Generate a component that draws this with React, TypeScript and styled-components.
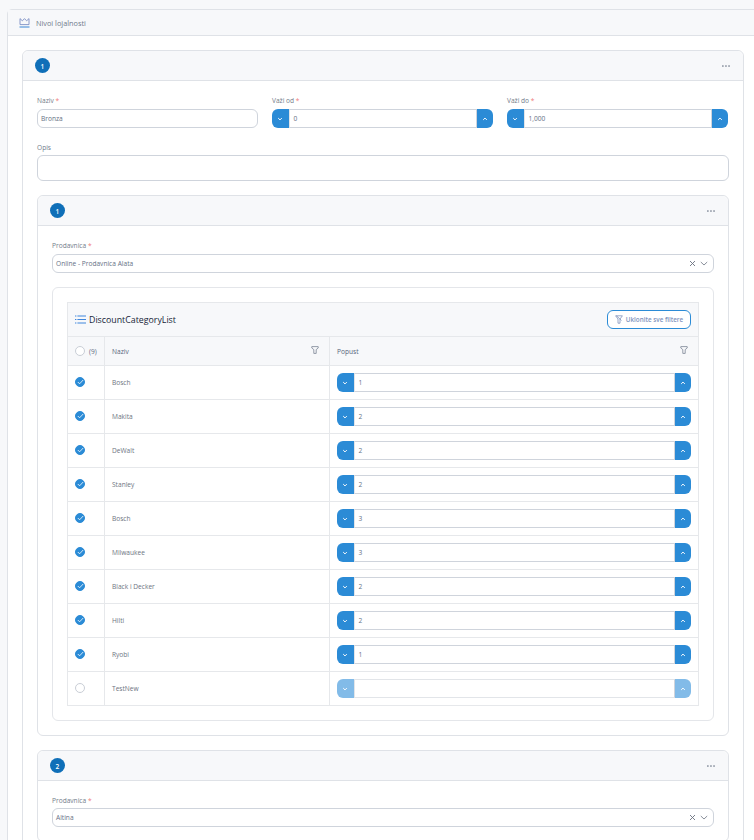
import { createGlobalStyle, styled } from 'styled-components';

const GlobalStyle = createGlobalStyle`
  html, body {
    margin: 0;
    padding: 0;
    height: 840px;
    overflow: hidden;
    background: #f7f8fa;
  }
  * { box-sizing: border-box; }
  body {
    font-family: "Open Sans", "Liberation Sans", sans-serif;
    font-size: 6.6px;
    color: #667085;
  }
`;

const Page = styled.div`
  width: 754px;
  height: 840px;
  padding: 9px 0 0 7px;
  overflow: hidden;
`;

const Shell = styled.div`
  width: 760px;
  background: #fff;
  border: 1px solid #dfe2e7;
  border-radius: 5px 0 0 0;
`;

const ShellHeader = styled.div`
  display: flex;
  align-items: center;
  gap: 6px;
  height: 26px;
  padding-left: 11px;
  background: #f7f8fa;
  border-bottom: 1px solid #dfe2e7;
  font-size: 7.3px;
  color: #6f7a8a;
`;

const ShellBody = styled.div`
  width: 736px;
  padding: 14px 0 0 14px;
`;

const Card = styled.section`
  border: 1px solid #dfe2e7;
  border-radius: 6px;
  background: #fff;
  & + & {
    margin-top: 14px;
  }
`;

const CardHeader = styled.div`
  display: flex;
  align-items: center;
  justify-content: space-between;
  height: 30px;
  padding: 0 13px 0 12px;
  background: #f7f8fa;
  border-bottom: 1px solid #dfe2e7;
  border-radius: 6px 6px 0 0;
`;

const Badge = styled.span`
  display: flex;
  align-items: center;
  justify-content: center;
  width: 15px;
  height: 15px;
  padding-top: 1px;
  border-radius: 50%;
  background: #0f6fb8;
  color: #fff;
  font-size: 6.6px;
  font-weight: 600;
`;

const CardBody = styled.div`
  display: flex;
  flex-direction: column;
  padding: 14px;
`;

const FormRow = styled.div`
  display: grid;
  grid-template-columns: repeat(3, 221px);
  column-gap: 14px;
`;

const Field = styled.div`
  display: flex;
  flex-direction: column;
`;

const NoteField = styled(Field)`
  margin: 14px 0;
`;

const Label = styled.label<{ $height?: number }>`
  height: ${(p) => p.$height ?? 14}px;
  line-height: 10px;
  padding-top: 1px;
  color: #737c8a;
`;

const Required = styled.span`
  color: #ef7a7a;
`;

const TextInput = styled.div`
  display: flex;
  align-items: center;
  height: 19px;
  padding-left: 3px;
  border: 1px solid #cfd4dc;
  border-radius: 6px;
  color: #667085;
`;

const TextArea = styled.div`
  height: 26px;
  border: 1px solid #cfd4dc;
  border-radius: 6px;
`;

const Spin = styled.div`
  display: flex;
  height: 19px;
`;

const SpinButton = styled.span<{ $side: 'left' | 'right'; $off?: boolean }>`
  display: flex;
  align-items: center;
  justify-content: center;
  flex: 0 0 16.5px;
  background: ${(p) => (p.$off ? '#82bbe8' : '#2b8bd6')};
  color: #fff;
  border-radius: ${(p) => (p.$side === 'left' ? '6px 0 0 6px' : '0 6px 6px 0')};
`;

const SpinValue = styled.div<{ $off?: boolean }>`
  flex: 1;
  display: flex;
  align-items: center;
  padding-left: 4px;
  border-top: 1px solid ${(p) => (p.$off ? '#e2e5e9' : '#cfd4dc')};
  border-bottom: 1px solid ${(p) => (p.$off ? '#e2e5e9' : '#cfd4dc')};
  border-left: 1px solid #e2e5e9;
  border-right: 1px solid #cfd4dc;
  color: #667085;
`;

const SelectBox = styled(TextInput)`
  justify-content: space-between;
  padding-right: 5px;
`;

const SelectIcons = styled.div`
  display: flex;
  align-items: center;
  gap: 4px;
  color: #6b7280;
`;

const ListCard = styled.div`
  margin-top: 14px;
  padding: 14px;
  border: 1px solid #e4e6ea;
  border-radius: 6px;
`;

const Table = styled.div`
  border: 1px solid #e6e8eb;
`;

const TableTitle = styled.div`
  display: flex;
  align-items: center;
  justify-content: space-between;
  height: 34px;
  padding: 0 7px;
  background: #f7f8fa;
  border-bottom: 1px solid #e6e8eb;
`;

const TitleText = styled.div`
  display: flex;
  align-items: center;
  gap: 3px;
  font-size: 8.8px;
  color: #161d38;
`;

const ClearButton = styled.button`
  display: flex;
  align-items: center;
  justify-content: center;
  gap: 3px;
  width: 84px;
  height: 19px;
  padding: 0;
  border: 1px solid #2b8bd6;
  border-radius: 6px;
  background: #fff;
  color: #8093bd;
  font-family: inherit;
  font-size: 6.3px;
  font-weight: 600;
`;

const Row = styled.div<{ $head?: boolean }>`
  display: grid;
  grid-template-columns: 37px 225px 1fr;
  height: ${(p) => (p.$head ? 29 : 34)}px;
  background: ${(p) => (p.$head ? '#f7f8fa' : '#fff')};
  border-bottom: 1px solid #e6e8eb;
  &:last-child {
    height: 33px;
    border-bottom: 0;
  }
`;

const Cell = styled.div`
  display: flex;
  align-items: center;
  justify-content: space-between;
  padding: 0 7px;
  border-right: 1px solid #e6e8eb;
  &:last-child {
    border-right: 0;
  }
`;

const NameCell = styled(Cell)`
  color: #6d7482;
`;

const HeadCell = styled(Cell)`
  padding-right: 10px;
  color: #56647a;
  svg {
    margin-top: -2px;
  }
`;

const SelectCell = styled(Cell)`
  justify-content: flex-start;
  gap: 4px;
`;

const Check = styled.span<{ $on?: boolean }>`
  display: flex;
  align-items: center;
  justify-content: center;
  width: 10px;
  height: 10px;
  margin-top: -1px;
  border-radius: 50%;
  background: ${(p) => (p.$on ? '#2b8bd6' : '#fff')};
  border: 1px solid ${(p) => (p.$on ? '#2b8bd6' : '#c9ced6')};
`;

const Count = styled.span`
  color: #5d6b82;
`;

const SpinWrap = styled.div`
  flex: 1;
`;

const Crown = () => (
  <svg width="11" height="10" viewBox="0 0 11 10" fill="none" strokeWidth="0.9">
    <path d="M1 0.6 V6.6 H10 V0.6 L7.6 2.8 L5.5 0.6 L3.4 2.8 Z" stroke="#7d8fc4" strokeLinejoin="round" />
    <path d="M0.5 9 H10.5" stroke="#4a8fd8" strokeWidth="1.1" />
  </svg>
);

const Chevron = ({ up }: { up?: boolean }) => (
  <svg width="6" height="6" viewBox="0 0 6 6" fill="none" stroke="currentColor" strokeWidth="1">
    <path d={up ? 'M1.2 3.9 L3 2.1 L4.8 3.9' : 'M1.2 2.1 L3 3.9 L4.8 2.1'} />
  </svg>
);

const Dots = () => (
  <svg width="8" height="2" viewBox="0 0 8 2" fill="#9aa1ad">
    <rect x="0" y="0.2" width="1.7" height="1.7" />
    <rect x="3.1" y="0.2" width="1.7" height="1.7" />
    <rect x="6.2" y="0.2" width="1.7" height="1.7" />
  </svg>
);

const Cross = () => (
  <svg width="7" height="7" viewBox="0 0 7 7" fill="none" stroke="currentColor" strokeWidth="0.9">
    <path d="M1 1 L6 6 M6 1 L1 6" />
  </svg>
);

const SelectChevron = () => (
  <svg width="8" height="7" viewBox="0 0 8 7" fill="none" stroke="currentColor" strokeWidth="0.8">
    <path d="M0.8 2 L4 5 L7.2 2" />
  </svg>
);

const Filter = () => (
  <svg width="8" height="8" viewBox="0 0 8 8" fill="none" stroke="#7b8494" strokeWidth="0.8">
    <path d="M0.8 0.6 H7.2 V2 L5.2 3.6 V7.4 H2.8 V3.6 L0.8 2 Z" strokeLinejoin="round" />
  </svg>
);

const FilterOff = () => (
  <svg width="8" height="9" viewBox="0 0 8 9" fill="none" stroke="#8093bd" strokeWidth="0.8">
    <path d="M0.6 0.8 H7.4 L5 4 V8.2 H3 V4 Z M1.5 0.8 L6.5 5.5" strokeLinejoin="round" />
  </svg>
);

const ListIcon = () => (
  <svg width="11" height="9" viewBox="0 0 11 9" fill="none" stroke="#3f86dc" strokeWidth="1">
    <path d="M2.4 1 H11 M2.4 4.5 H11 M2.4 8 H11 M0 1 H1.4 M0 4.5 H1.4 M0 8 H1.4" />
  </svg>
);

const Tick = () => (
  <svg width="7" height="6" viewBox="0 0 7 6" fill="none" stroke="#fff" strokeWidth="0.8">
    <path d="M0.8 3 L2.6 4.8 L6.2 1" />
  </svg>
);

function SpinInput({ value, off }: { value?: string; off?: boolean }) {
  return (
    <Spin>
      <SpinButton $side="left" $off={off}><Chevron /></SpinButton>
      <SpinValue $off={off}>{value}</SpinValue>
      <SpinButton $side="right" $off={off}><Chevron up /></SpinButton>
    </Spin>
  );
}

function StoreSelect({ value, labelHeight }: { value: string; labelHeight?: number }) {
  return (
    <Field>
      <Label $height={labelHeight}>Prodavnica <Required>*</Required></Label>
      <SelectBox>
        {value}
        <SelectIcons><Cross /><SelectChevron /></SelectIcons>
      </SelectBox>
    </Field>
  );
}

const categories = [
  { name: 'Bosch', discount: '1' },
  { name: 'Makita', discount: '2' },
  { name: 'DeWalt', discount: '2' },
  { name: 'Stanley', discount: '2' },
  { name: 'Bosch', discount: '3' },
  { name: 'Milwaukee', discount: '3' },
  { name: 'Black i Decker', discount: '2' },
  { name: 'Hilti', discount: '2' },
  { name: 'Ryobi', discount: '1' },
  { name: 'TestNew', discount: '' },
];

export default function App() {
  return (
    <Page>
      <GlobalStyle />
      <Shell>
        <ShellHeader><Crown />Nivoi lojalnosti</ShellHeader>
        <ShellBody>
          <Card>
            <CardHeader><Badge>1</Badge><Dots /></CardHeader>
            <CardBody>
              <FormRow>
                <Field>
                  <Label>Naziv <Required>*</Required></Label>
                  <TextInput>Bronza</TextInput>
                </Field>
                <Field>
                  <Label>Važi od <Required>*</Required></Label>
                  <SpinInput value="0" />
                </Field>
                <Field>
                  <Label>Važi do <Required>*</Required></Label>
                  <SpinInput value="1,000" />
                </Field>
              </FormRow>
              <NoteField>
                <Label $height={13}>Opis</Label>
                <TextArea />
              </NoteField>
              <Card>
                <CardHeader><Badge>1</Badge><Dots /></CardHeader>
                <CardBody>
                  <StoreSelect value="Online - Prodavnica Alata" />
                  <ListCard>
                    <Table>
                      <TableTitle>
                        <TitleText><ListIcon />DiscountCategoryList</TitleText>
                        <ClearButton><FilterOff />Uklonite sve filtere</ClearButton>
                      </TableTitle>
                      <Row $head>
                        <SelectCell><Check /><Count>(9)</Count></SelectCell>
                        <HeadCell>Naziv<Filter /></HeadCell>
                        <HeadCell>Popust<Filter /></HeadCell>
                      </Row>
                      {categories.map((c) => (
                        <Row key={c.name + c.discount}>
                          <SelectCell><Check $on={c.discount !== ''}>{c.discount !== '' && <Tick />}</Check></SelectCell>
                          <NameCell>{c.name}</NameCell>
                          <Cell><SpinWrap><SpinInput value={c.discount} off={c.discount === ''} /></SpinWrap></Cell>
                        </Row>
                      ))}
                    </Table>
                  </ListCard>
                </CardBody>
              </Card>
              <Card>
                <CardHeader><Badge>2</Badge><Dots /></CardHeader>
                <CardBody>
                  <StoreSelect value="Altina" labelHeight={13} />
                </CardBody>
              </Card>
            </CardBody>
          </Card>
        </ShellBody>
      </Shell>
    </Page>
  );
}
